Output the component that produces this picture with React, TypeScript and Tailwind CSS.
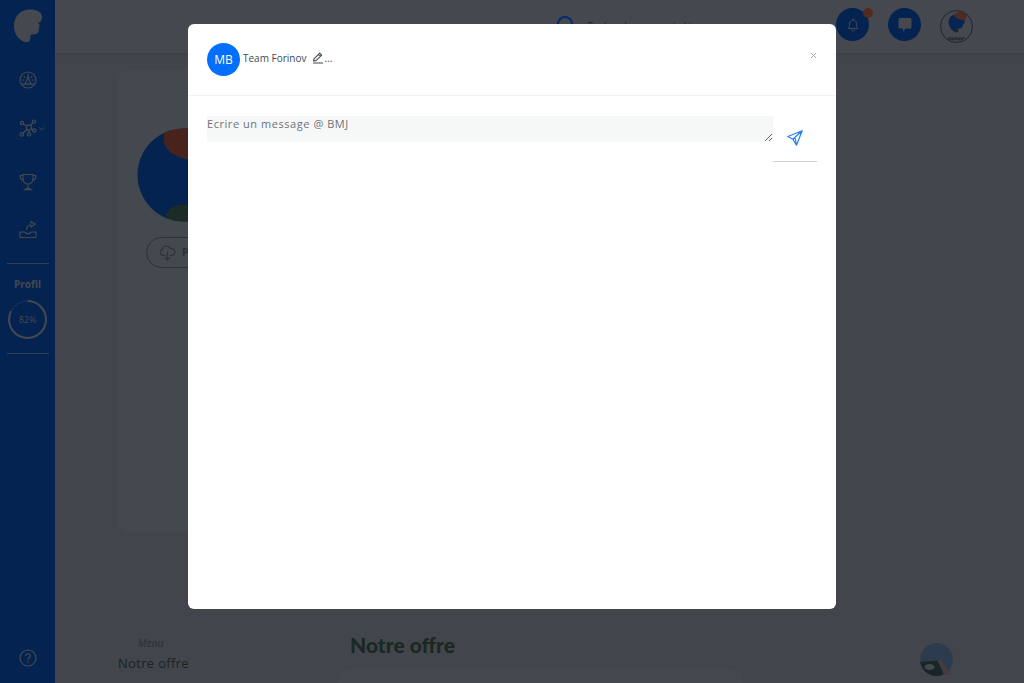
import React, { useState } from "react";

const PROFILE_PROGRESS = 82;

function BrandLogo() {
  return (
    <svg viewBox="0 0 28 34" className="h-[34px] w-7" fill="#45494f">
      <path d="M16 0.500C6 .5 0 8 0 17c0 8.500 5.500 14.500 11 16 3.500.700 6-1.500 5.300-5-.100-1.800.7-2.600 2.200-2.500 4.500.2 7-1.700 6.300-6 1.200-2 1-4.300-.8-5.700C27 13.500 28.500 10 28 7 27 2.500 22 .3 16 .5z" />
    </svg>
  );
}

function GaugeIcon() {
  return (
    <svg viewBox="0 0 18 18" className="size-[18px]" fill="none" stroke="currentColor" strokeWidth="1.2" strokeLinecap="round">
      <circle cx="9" cy="9" r="8" />
      <path d="M2.500 13.200h4M11.500 13.200h4M6.500 13.200a2.600 2.600 0 0 1 1.200-3L9.200 5l1.200 5.200a2.600 2.600 0 0 1 1.200 3zM3.500 9h1M13.500 9h1M5 5.500l.8.800M13 5.500l-.8.800M9 3v.500" />
    </svg>
  );
}

function NetworkIcon() {
  return (
    <svg viewBox="0 0 18 18" className="size-[18px]" fill="none" stroke="currentColor" strokeWidth="1.2">
      <circle cx="10" cy="8.500" r="2.600" />
      <circle cx="3" cy="4" r="1.600" />
      <circle cx="15" cy="2.600" r="1.600" />
      <circle cx="2.800" cy="15.400" r="1.700" />
      <circle cx="10" cy="15.400" r="1.600" />
      <circle cx="15.300" cy="11.500" r="1.600" />
      <path d="M4.400 4.900l3.400 2.200M13.900 3.700l-2.200 2.600M4 14.200l4.200-3.900M10 11.100v2.700M12.400 9.700l1.500.900" />
    </svg>
  );
}

function TrophyIcon() {
  return (
    <svg viewBox="0 0 18 18" className="size-[18px]" fill="none" stroke="currentColor" strokeWidth="1.1" strokeLinejoin="round">
      <path d="M4 1.500h10v4.500c0 3-2 5-5 5s-5-2-5-5zM4 2.500H1.200v1.500c0 2 1.300 3 3 3M14 2.500h2.800v1.500c0 2-1.300 3-3 3M9 11v4.500M6.500 16.500c0-.800.800-1.200 2.500-1.200s2.500.400 2.500 1.200zM4.500 16.700h9" />
    </svg>
  );
}

function ShareTrayIcon() {
  return (
    <svg viewBox="0 0 18 18" className="size-[18px]" fill="none" stroke="currentColor" strokeWidth="1.2" strokeLinejoin="round">
      <path d="M1 11h4.500c.700 0 .900 1.800 3.500 1.800s2.800-1.800 3.500-1.800H17v4.500c0 .700-.300 1-1 1H2c-.700 0-1-.300-1-1zM7.500 9.200c0-3.500 2-5.200 4.500-5.200V6.200l4-3.200-4-2.500v2" />
    </svg>
  );
}

function ProfileGauge() {
  const length = 2 * Math.PI * 18;
  return (
    <div className="relative size-[39px]">
      <svg viewBox="0 0 38 38" className="size-full -rotate-90" fill="none">
        <circle cx="19" cy="19" r="18" stroke="#1f334f" strokeWidth="1" />
        <circle
          cx="19"
          cy="19"
          r="18"
          stroke="#45494f"
          strokeWidth="2"
          strokeDasharray={`${(length * PROFILE_PROGRESS) / 100} ${length}`}
        />
      </svg>
      <span className="absolute inset-0 flex items-center justify-center text-[9px]">
        {PROFILE_PROGRESS}%
      </span>
    </div>
  );
}

function Sidebar() {
  return (
    <aside className="flex w-[55px] shrink-0 flex-col items-center bg-[#042351] pt-[9px] pb-4 text-[#45494f]">
      <a href="#home" aria-label="Forinov">
        <BrandLogo />
      </a>
      <nav className="mt-7 flex flex-col items-center gap-[30px]">
        <a href="#dashboard" aria-label="Tableau de bord">
          <GaugeIcon />
        </a>
        <a href="#network" aria-label="Réseau" className="relative">
          <NetworkIcon />
          <svg viewBox="0 0 6 4" className="absolute top-2 left-5 h-1 w-1.5" fill="none" stroke="currentColor">
            <path d="M.5.500c1 2.500 4 2.500 5 0" />
          </svg>
        </a>
        <a href="#challenges" aria-label="Challenges" className="mt-1.5">
          <TrophyIcon />
        </a>
        <a href="#share" aria-label="Partager">
          <ShareTrayIcon />
        </a>
      </nav>
      <div className="mt-6 flex w-[42px] flex-col items-center border-y border-[#33404f] pt-3 pb-3.5">
        <span className="text-[10px] leading-4 font-bold">Profil</span>
        <div className="mt-2">
          <ProfileGauge />
        </div>
      </div>
      <a href="#help" aria-label="Aide" className="mt-auto">
        <svg viewBox="0 0 18 18" className="size-[18px]" fill="none" stroke="currentColor" strokeWidth="1.2">
          <circle cx="9" cy="9" r="8" />
          <path d="M6.800 7c0-3 4.600-2.900 4.600-.300 0 1.800-2.400 1.900-2.400 4M9 12v1.400" />
        </svg>
      </a>
    </aside>
  );
}

function Topbar() {
  return (
    <header className="flex h-[53px] items-start justify-end bg-[#45494f] pt-2 pr-[51px] shadow-[0_1px_4px_rgba(0,0,0,0.12)]">
      <label className="mt-2 mr-[59px] flex items-start gap-3">
        <svg viewBox="0 0 18 18" className="size-[18px]" fill="none" stroke="#042b6b" strokeWidth="2">
          <circle cx="8" cy="8" r="7" />
          <path d="M13 13l4 4" />
        </svg>
        <input
          type="search"
          placeholder="Rechercher un mot clé"
          className="h-5 w-[190px] bg-transparent text-[10px] text-[#20262b] placeholder:text-[#20262b]"
        />
      </label>
      <div className="flex items-start gap-[19px]">
        <button aria-label="Notifications" className="relative flex size-[33px] items-center justify-center rounded-full bg-[#042351]">
          <svg viewBox="0 0 12 14" className="h-3.5 w-3" fill="none" stroke="#45494f" strokeWidth="1" strokeLinejoin="round">
            <path d="M1 10.500c1-1 1.500-2 1.500-4.500C2.500 3.500 4 2 6 2s3.500 1.500 3.500 4c0 2.500.500 3.500 1.500 4.500zM6 2V.5M4.500 11.500c0 2 3 2 3 0" />
          </svg>
          <span className="absolute top-0 -right-1 size-2.5 rounded-full bg-[#512a22]" />
        </button>
        <button aria-label="Messages" className="flex size-[33px] items-center justify-center rounded-full bg-[#042351]">
          <svg viewBox="0 0 14 14" className="size-3.5" fill="#45494f">
            <path d="M2 0h10a1.500 1.500 0 0 1 1.500 1.500v7.500a1.500 1.500 0 0 1-1.500 1.500H7.800L5 13.700v-3.200H2A1.500 1.500 0 0 1 .5 9V1.500A1.500 1.500 0 0 1 2 0z" />
          </svg>
        </button>
        <button aria-label="Mon compte" className="mt-0.5 size-[33px]">
          <svg viewBox="0 0 33 33" className="size-full">
            <circle cx="16.500" cy="16.500" r="16" fill="#45494f" stroke="#1f2529" />
            <path d="M15 4.500c-4 .5-6.500 4-6.300 8 .2 5 3.500 8.500 6.800 9.500 2.500.3 2.500-2 2.500-3.500 4 .2 5-1.500 4.800-4 2.500-1 2.500-4.500.200-6z" fill="#082453" />
            <path d="M14 4.500c3-4 11.500-3 12.500 2 .2 2.500-1.500 4-4 4-2-2-8-1-8.500-6z" fill="#512a22" />
            <circle cx="16.500" cy="20.500" r="2" fill="#1b2824" />
            <path d="M8 28h17M9.500 29.500h14" stroke="#23282c" strokeWidth="1.500" strokeDasharray="2 .8" />
          </svg>
        </button>
      </div>
    </header>
  );
}

function CompanyCard() {
  return (
    <section className="flex h-[462px] w-[132px] flex-col items-center rounded-[10px] bg-[#44484f] pt-[58px]">
      <svg viewBox="0 0 94 94" className="size-[94px]">
        <clipPath id="company-avatar">
          <circle cx="47" cy="47" r="46.500" />
        </clipPath>
        <g clipPath="url(#company-avatar)">
          <path d="M0 0h94v94H0z" fill="#042351" />
          <path d="M27 0v14c1 8 9 14 26 18h40V0z" fill="#47231c" />
          <path d="M28 94c0-9 5-16 13-17h40v17z" fill="#1b2b26" />
        </g>
      </svg>
      <button className="mt-[15px] flex h-[31px] w-[76px] items-center gap-1.5 overflow-hidden rounded-full border border-[#2c3136] pl-3 text-[11px] font-bold text-[#2c3136]">
        <svg viewBox="0 0 17 16" className="h-4 w-[17px] shrink-0" fill="none" stroke="currentColor" strokeWidth="1.1" strokeLinecap="round">
          <path d="M6 10.500H4a3 3 0 0 1-.8-5.800C3.500 2.300 5 1 7.300 1c2 0 3.200 1 3.800 2.500 3 0 4.700 1.400 4.700 3.700 0 2-1.300 3.300-3.300 3.300h-1.500M8.500 7v8M6 12.700L8.500 15l2.500-2.300" />
        </svg>
        Photo
      </button>
    </section>
  );
}

function Offer() {
  return (
    <section className="mt-[101px] grid grid-cols-[220px_1fr]">
      <nav>
        <p className="pl-5 text-[10px] leading-5 tracking-wide text-[#282d32] italic">Menu</p>
        <a href="#offre" className="block text-[13px] leading-5 tracking-wide text-[#1a211f]">
          Notre offre
        </a>
      </nav>
      <div>
        <h2 className="pl-3 text-[21px] leading-6 font-black text-[#1a2823] [font-family:Lato,'Open_Sans',sans-serif]">
          Notre offre
        </h2>
        <div className="mt-3 h-24 max-w-[405px] rounded-[10px] bg-[#44484f]" />
      </div>
    </section>
  );
}

function ChatBubble() {
  return (
    <button aria-label="Assistance" className="fixed right-[71px] bottom-[7px] size-[33px]">
      <svg viewBox="0 0 33 33" className="size-full">
        <clipPath id="chat-avatar">
          <circle cx="16.500" cy="16.500" r="16.500" />
        </clipPath>
        <g clipPath="url(#chat-avatar)">
          <path d="M0 0h33v33H0z" fill="#2d3b4f" />
          <path d="M0 19l18-1.500 6 15.500H0z" fill="#1a2625" />
          <ellipse cx="9.500" cy="24" rx="5" ry="3" fill="#42474b" />
        </g>
        <path d="M17 17.500h4L32 32h-6z" fill="#493b3c" />
      </svg>
    </button>
  );
}

function MessageDialog({ onClose }: { onClose: () => void }) {
  const [message, setMessage] = useState("");

  return (
    <div className="fixed inset-0 z-50 flex justify-center pt-6 pb-[74px]">
      <div role="dialog" aria-modal="true" aria-label="Team Forinov" className="w-full max-w-[648px] rounded-md bg-white">
        <div className="flex h-[72px] items-center border-b border-[#f1f2f3] px-[19px]">
          <span className="flex size-[33px] items-center justify-center rounded-full bg-[#006fff] text-xs text-white">
            MB
          </span>
          <div className="mb-1 ml-[3px] flex items-center gap-1.5 text-[#434950]">
            <h1 className="text-[10px] leading-4">Team Forinov</h1>
            <button aria-label="Renommer" className="flex items-end text-[10px]">
              <svg viewBox="0 0 12 12" className="size-3" fill="none" stroke="currentColor" strokeWidth="1.1" strokeLinejoin="round">
                <path d="M1.500 9L2 6.800 7.700 1.200l2 2L4 8.600zM6.500 2.400l2 2M1 11h10" />
              </svg>
              <span className="leading-3">...</span>
            </button>
          </div>
          <button aria-label="Fermer" onClick={onClose} className="mb-2 ml-auto py-0.5 pr-px pl-0.5">
            <svg viewBox="0 0 5 5" className="size-[5px]" stroke="#a4a9b0">
              <path d="M0 0l5 5M5 0L0 5" />
            </svg>
          </button>
        </div>
        <form className="flex items-start px-[19px] pt-5" onSubmit={(e) => e.preventDefault()}>
          <textarea
            aria-label="Message"
            rows={1}
            placeholder="Ecrire un message @ BMJ"
            value={message}
            onChange={(e) => setMessage(e.target.value)}
            className="h-[26px] min-w-0 flex-1 resize overflow-hidden bg-[#f6f8f8] text-[11px] leading-4 tracking-wider text-[#434950] outline-none placeholder:text-[#6b737b]"
          />
          <button aria-label="Envoyer" className="flex h-[46px] w-11 items-center justify-center border-b border-[#cfd2d5] pb-0.5">
            <svg viewBox="0 0 16 16" className="size-4" fill="none" stroke="#2a7fee" strokeWidth="1.2" strokeLinejoin="round">
              <path d="M15.200.8L.8 6.500l5 2.700 3.700 6zM15.200.8L5.800 9.200M9.500 15.200L8 7.300" />
            </svg>
          </button>
        </form>
      </div>
    </div>
  );
}

export default function App() {
  const [isOpen, setIsOpen] = useState(true);

  return (
    <div className="flex h-screen overflow-hidden bg-[#42464c] [font-family:'Open_Sans','Noto_Sans',sans-serif]">
      <Sidebar />
      <div className="min-w-0 flex-1">
        <Topbar />
        <main className="px-[63px] pt-[17px]">
          <CompanyCard />
          <Offer />
        </main>
      </div>
      <ChatBubble />
      {isOpen && <MessageDialog onClose={() => setIsOpen(false)} />}
    </div>
  );
}
